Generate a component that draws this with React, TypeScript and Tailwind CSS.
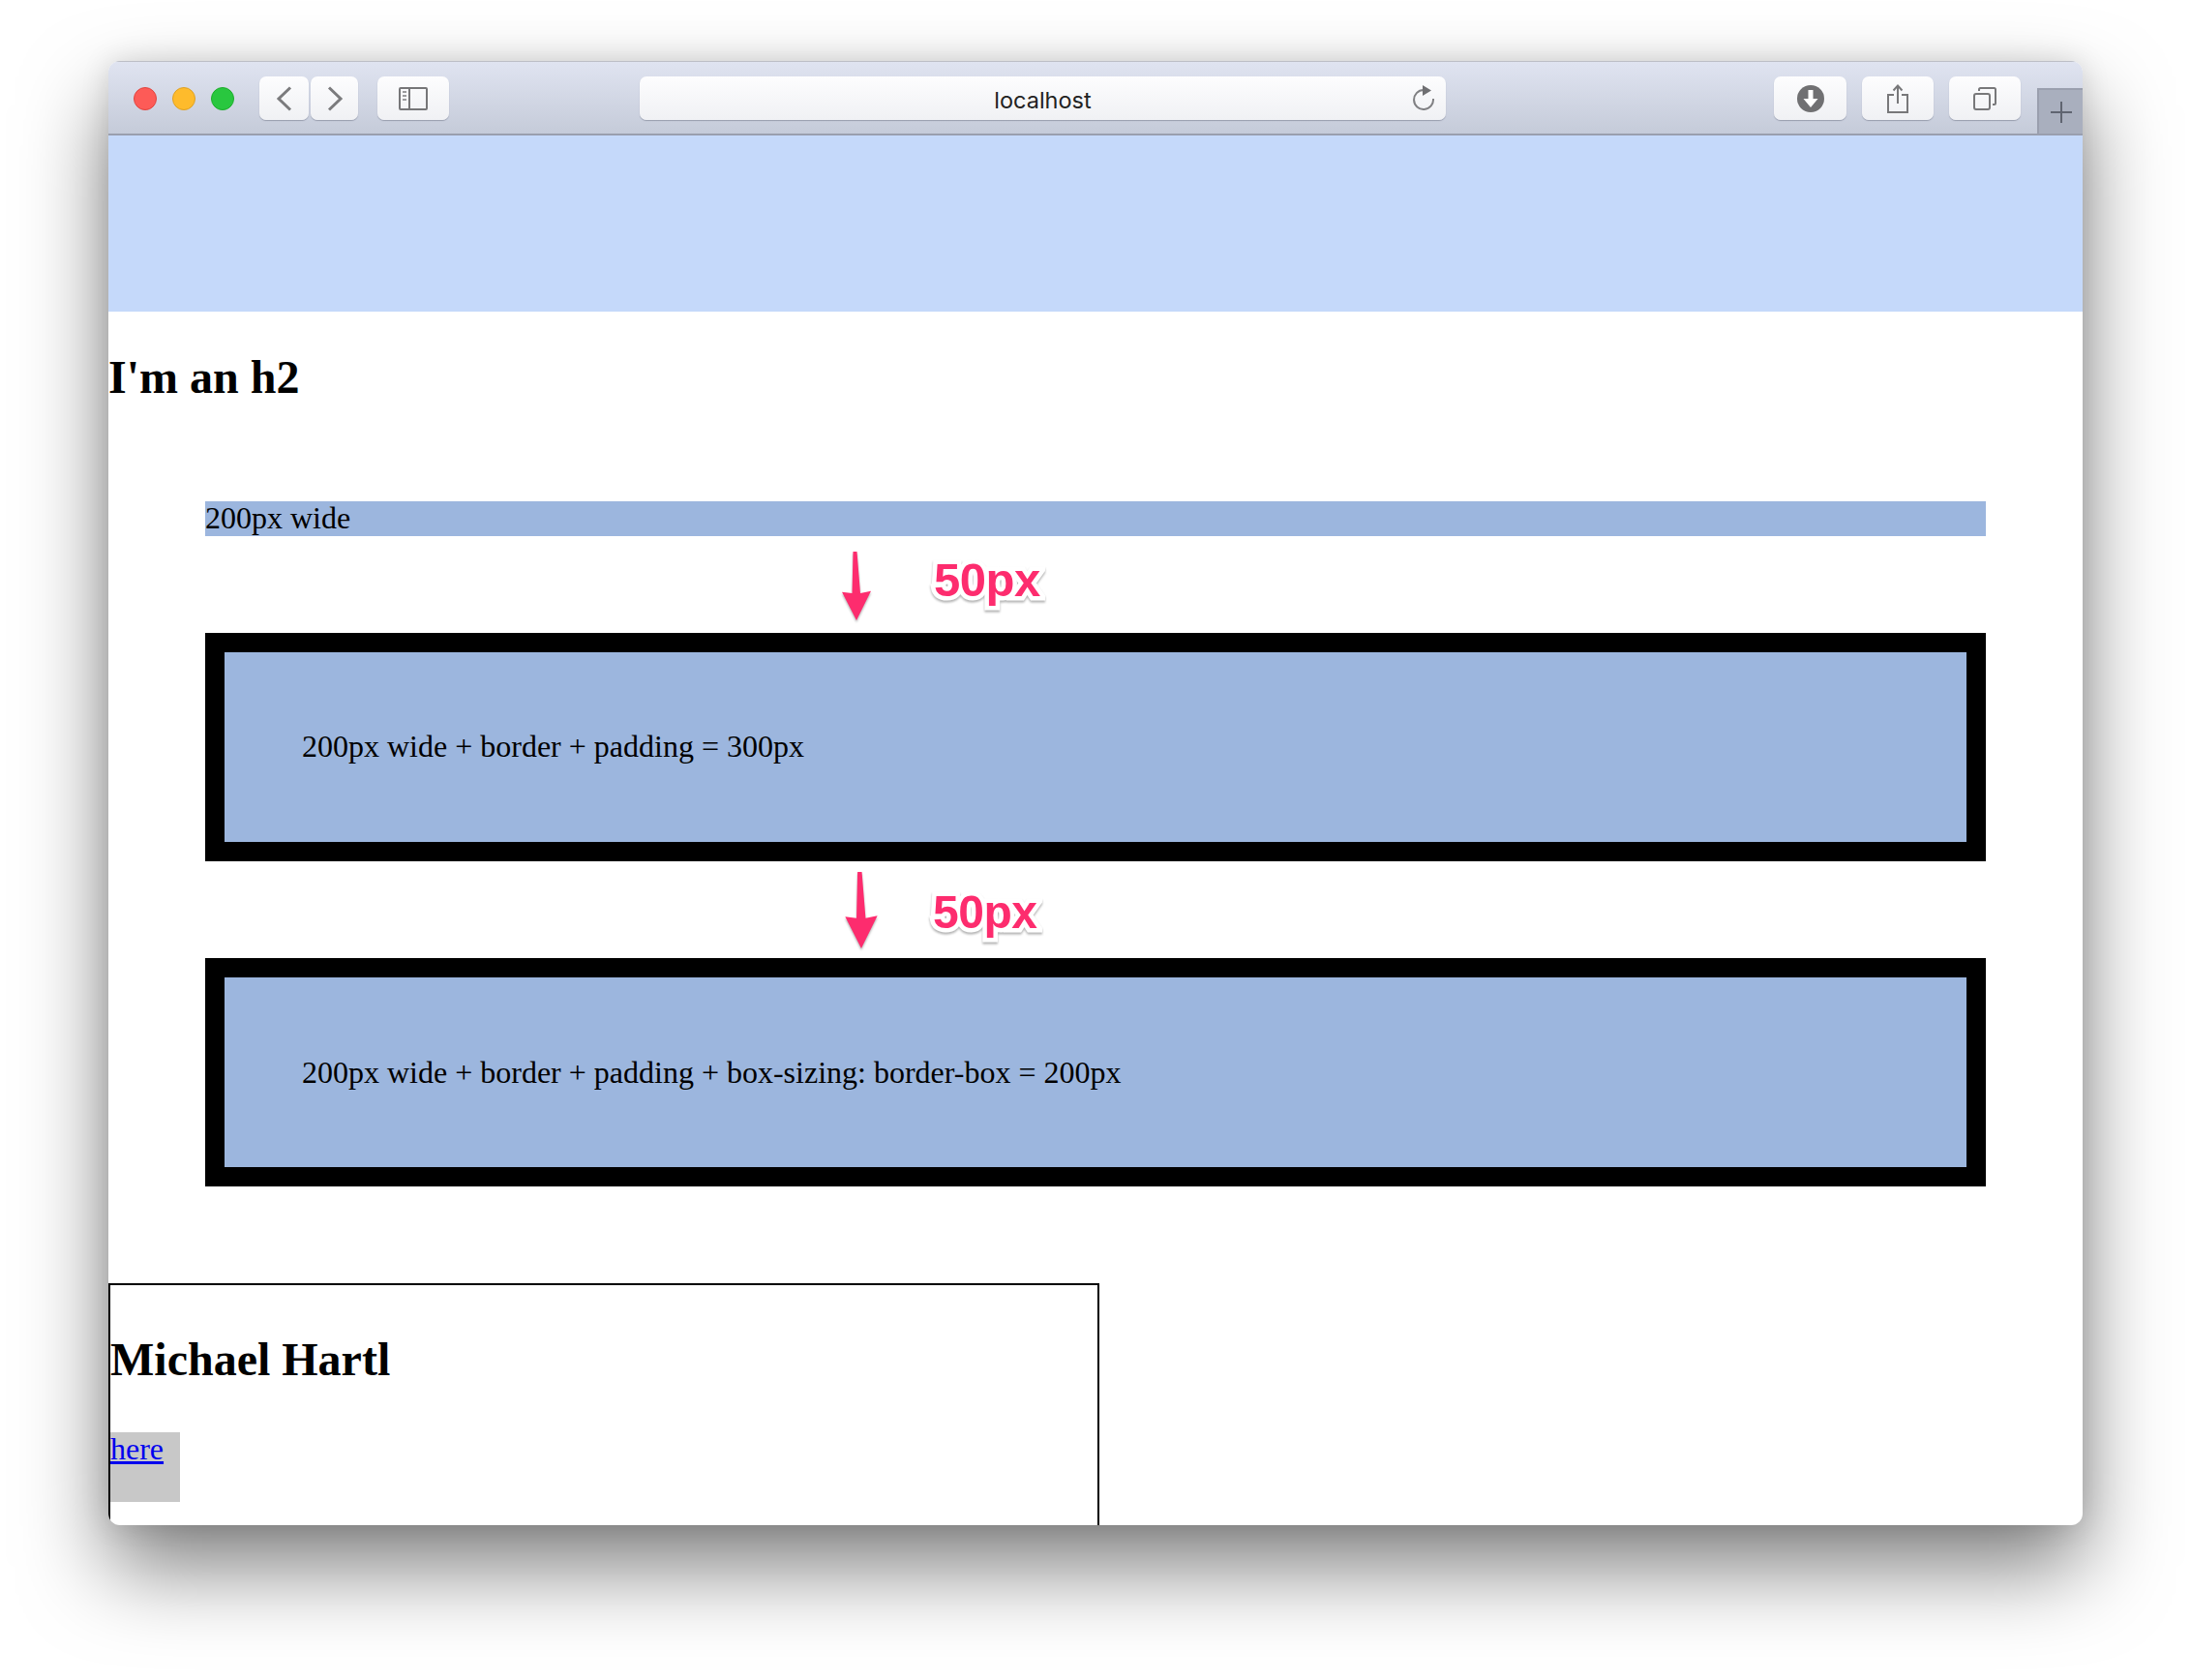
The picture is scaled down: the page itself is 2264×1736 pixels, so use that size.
const serif = "font-['Liberation_Serif','Times_New_Roman',serif]"

function ToolbarButton({ className, children }: { className: string; children?: React.ReactNode }) {
  return (
    <div className={`h-[45px] rounded-[7px] bg-gradient-to-b from-[#fdfdfe] to-[#f0f1f4] shadow-[0_1px_1px_rgba(90,95,115,0.45)] flex items-center justify-center ${className}`}>
      {children}
    </div>
  )
}

function Toolbar() {
  return (
    <div className="relative h-[77px] shrink-0 flex items-start pt-[16px] pl-[26px] bg-gradient-to-b from-[#e0e4f1] to-[#c5cbd9] border-b-2 border-[#9a9fae] shadow-[inset_0_1px_0_#bdbfc6]">
      {/* Traffic lights */}
      <div className="flex gap-[16px] mt-[11px]">
        <div className="w-[24px] h-[24px] rounded-full bg-[#fd5b57] border border-[#e0443e]" />
        <div className="w-[24px] h-[24px] rounded-full bg-[#febb2c] border border-[#dea123]" />
        <div className="w-[24px] h-[24px] rounded-full bg-[#29c73f] border border-[#1dad2b]" />
      </div>

      <ToolbarButton className="w-[51px] ml-[26px]">
        <svg width="18" height="26" viewBox="0 0 18 26" fill="none" stroke="#7b7b7d" strokeWidth="3"><path d="M15 1.5 3 13l12 11.5" /></svg>
      </ToolbarButton>
      <ToolbarButton className="w-[49px] ml-[2px]">
        <svg width="18" height="26" viewBox="0 0 18 26" fill="none" stroke="#7b7b7d" strokeWidth="3"><path d="M3 1.5 15 13 3 24.5" /></svg>
      </ToolbarButton>
      <ToolbarButton className="w-[74px] ml-[20px]">
        <svg width="30" height="24" viewBox="0 0 30 24" fill="none">
          <rect x="1" y="1" width="28" height="22" rx="1" stroke="#767678" strokeWidth="2" />
          <path d="M11 1v22" stroke="#767678" strokeWidth="2" />
          <path d="M4 5h4M4 9h4M4 13h4" stroke="#9b9b9d" strokeWidth="2" />
        </svg>
      </ToolbarButton>

      {/* Address bar */}
      <ToolbarButton className="relative w-[833px] ml-[197px] pt-[4px]">
        <span className="font-['Inter',sans-serif] text-[23.5px] text-[#222]">localhost</span>
        <svg className="absolute right-[11px] top-[9px]" width="24" height="26" viewBox="0 0 24 26" fill="none">
          <path d="M12 5a10 10 0 1 0 10 9" stroke="#808083" strokeWidth="2" />
          <path d="M11 0l9 5.500-9 5.500z" fill="#6f6f72" />
        </svg>
      </ToolbarButton>

      <ToolbarButton className="w-[75px] ml-[339px]">
        <svg width="28" height="28" viewBox="0 0 28 28">
          <circle cx="14" cy="14" r="14" fill="#707072" />
          <path d="M11.500 5h5v9h5L14 23 6.500 14h5z" fill="#fff" />
        </svg>
      </ToolbarButton>
      <ToolbarButton className="w-[74px] ml-[16px]">
        <svg width="22" height="30" viewBox="0 0 22 30" fill="none" stroke="#78787a" strokeWidth="2">
          <path d="M7 11H1v18h20V11h-6" />
          <path d="M11 20V2M6.500 6.500 11 1.500l4.500 5" />
        </svg>
      </ToolbarButton>
      <ToolbarButton className="w-[74px] ml-[16px]">
        <svg width="24" height="24" viewBox="0 0 24 24" fill="none" stroke="#78787a" strokeWidth="2">
          <rect x="1" y="7" width="16" height="16" rx="2" />
          <path d="M6 4V2.500A1.500 1.500 0 0 1 7.500 1H21.500A1.500 1.500 0 0 1 23 2.500V16.500A1.500 1.500 0 0 1 21.500 18H20" />
        </svg>
      </ToolbarButton>

      {/* New tab */}
      <div className="absolute right-0 bottom-0 w-[47px] h-[47px] bg-[#a9afbe] border-l-2 border-t-2 border-[#9a9fae] flex items-center justify-center">
        <svg width="22" height="22" viewBox="0 0 22 22" stroke="#5f6470" strokeWidth="2"><path d="M11 0v22M0 11h22" /></svg>
      </div>
    </div>
  )
}

function Gap({ arrowLeft, arrowW, arrowH, arrowTop, labelClass }: { arrowLeft: string; arrowW: number; arrowH: number; arrowTop: string; labelClass: string }) {
  return (
    <div className="h-[100px] flex items-start drop-shadow-[0_2px_1px_rgba(0,0,0,0.3)]">
      <svg className={`${arrowLeft} ${arrowTop}`} width={arrowW} height={arrowH} viewBox="0 0 30 72">
        <path d="M11.500 0h4L19 43 30 40.700 15 71 0 41.700 10.500 43z" fill="#fd2c6e" />
      </svg>
      <span className={`${labelClass} font-['Liberation_Sans',Arial,sans-serif] font-bold leading-[56px] tracking-[-0.5px] text-[#fd2c6e] [-webkit-text-stroke:9px_white] [paint-order:stroke_fill]`}>
        50px
      </span>
    </div>
  )
}

function BorderBox({ text, className }: { text: string; className: string }) {
  return (
    <div className={`h-[236px] border-[20px] border-black bg-[#9cb6de] flex items-center pl-[80px] text-[32px] leading-[36px] ${className}`}>
      {text}
    </div>
  )
}

export default function App() {
  return (
    <div className={`w-[2264px] h-[1736px] bg-white pt-[63px] pl-[112px] overflow-hidden ${serif}`}>
      <div className="w-[2040px] h-[1513px] rounded-[12px] overflow-hidden flex flex-col bg-white text-black shadow-[0_44px_88px_rgba(0,0,0,0.5),0_0_30px_rgba(0,0,0,0.12)]">
        <Toolbar />
        <div className="flex-1 overflow-hidden">
          <div className="h-[182px] bg-[#c5d9fa]" />
          <h2 className="mt-[40px] text-[48px] leading-[55px] font-bold">I'm an h2</h2>

          <div className="mx-[100px] mt-[101px]">
            <div className="h-[36px] bg-[#9cb6de] text-[32px] leading-[34px]">200px wide</div>
            <Gap arrowLeft="ml-[658px]" arrowW={30} arrowH={72} arrowTop="mt-[16px]" labelClass="ml-[65px] mt-[17px] text-[49px]" />
            <BorderBox className="pb-[2px]" text="200px wide + border + padding = 300px" />
            <Gap arrowLeft="ml-[661px]" arrowW={34} arrowH={80} arrowTop="mt-[11px]" labelClass="ml-[57px] mt-[25px] text-[48px]" />
            <BorderBox className="pb-[1px]" text="200px wide + border + padding + box-sizing: border-box = 200px" />
          </div>

          <div className="mt-[100px] w-[1024px] h-[400px] border-2 border-black">
            <h2 className="mt-[49px] text-[48px] leading-[55px] font-bold">Michael Hartl</h2>
            <div className="mt-[48px] w-[72px] h-[72px] bg-[#c8c8c8] text-[32px] leading-[34px]">
              <a href="#" className="text-[#0000ee] underline">here</a>
            </div>
          </div>
        </div>
      </div>
    </div>
  )
}
